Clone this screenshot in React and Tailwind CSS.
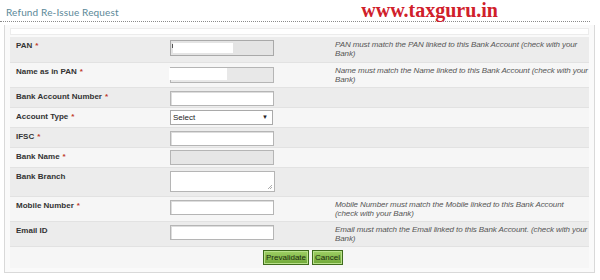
import React from 'react'

const rows=[
{label:'PAN',req:true,kind:'pan',h:'h-[26px]',hint:['PAN must match the PAN linked to this Bank Account (check with your','Bank)']},
{label:'Name as in PAN',req:true,kind:'name',h:'h-[25px]',hint:['Name must match the Name linked to this Bank Account (check with your','Bank)']},
{label:'Bank Account Number',req:true,kind:'text',h:'h-[20px]'},
{label:'Account Type',req:true,kind:'select',h:'h-[20px]'},
{label:'IFSC',req:true,kind:'text',h:'h-[20px]'},
{label:'Bank Name',req:true,kind:'disabled',h:'h-[20px]'},
{label:'Bank Branch',req:false,kind:'area',h:'h-[29px]'},
{label:'Mobile Number',req:true,kind:'text',h:'h-[25px]',hint:['Mobile Number must match the Mobile linked to this Bank Account','(check with your Bank)']},
{label:'Email ID',req:false,kind:'text',h:'h-[25px]',hint:['Email must match the Email linked to this Bank Account. (check with your','Bank)']}
]

function Field({kind}){

if(kind==='pan'){
return(
<div className="relative w-[104px] h-[16px] bg-[#e4e4e4] border border-[#a9a9a9] mt-[3px]">
<div className="absolute left-[2px] top-[2px] w-[60px] h-[10px] bg-white"/>
<div className="absolute left-[1px] top-[3px] w-[1px] h-[4px] bg-[#555]"/>
</div>
)
}

if(kind==='name'){
return(
<div className="relative w-[104px] h-[16px] bg-[#e8e8e8] border border-[#b5b5b5] mt-[4px]">
<div className="absolute left-[-2px] top-[0px] w-[58px] h-[12px] bg-white"/>
</div>
)
}

if(kind==='select'){
return(
<div className="w-[103px] h-[15px] bg-white border border-[#a9a9a9] mt-[2px] flex items-center justify-between px-[2px] text-[8px] text-[#222]">
<span>Select</span>
<span className="text-[6px] pr-[2px]">▼</span>
</div>
)
}

if(kind==='disabled'){
return(
<div className="w-[104px] h-[15px] bg-[#e6e6e6] border border-[#b5b5b5] mt-[2px]"/>
)
}

if(kind==='area'){
return(
<div className="relative w-[105px] h-[21px] bg-white border border-[#b5b5b5] mt-[3px]">
<svg className="absolute right-[1px] bottom-[1px]" width="6" height="6" viewBox="0 0 6 6">
<path d="M5 1 L1 5 M5 3 L3 5" stroke="#999" strokeWidth="0.8"/>
</svg>
</div>
)
}

return(
<div className="w-[104px] h-[15px] bg-white border border-[#b5b5b5] shadow-[inset_1px_1px_0_#ddd] mt-[3px]"/>
)

}

export default function App(){

return(

<div className="w-[600px] h-[280px] bg-white overflow-hidden relative font-['Liberation_Sans',Arial,sans-serif]">

<div className="flex items-end justify-between pl-[6px] pr-[10px] pt-[1px] h-[22px] border-b border-dotted border-[#8a8a8a] w-[590px]">

<span className="font-['Lato',sans-serif] text-[10px] tracking-[0.15px] text-[#5a8898] pb-[1px]">
Refund Re-Issue Request
</span>

<span className="font-['Liberation_Serif',serif] font-bold text-[20px] leading-none text-[#d0202a] mr-[82px] pb-[1px]">
www.taxguru.in
</span>

</div>

<div className="ml-[4px] mt-[3px] w-[591px] border-l border-r border-b border-[#d9d9d9] bg-[#fafafa] px-[5px] pt-[3px] pb-[4px]">

<div className="h-[7px] bg-white border border-[#ececec]"/>

<div className="mt-[2px]">

{rows.map((r,i)=>(

<div
key={r.label}
className={
'grid grid-cols-[160px_165px_1fr] border-b border-[#e2e2e2] '+
r.h+' '+
(i%2===0?'bg-[#ececec]':'bg-[#f6f6f6]')
}
>

<div className="pl-[6px] pt-[4px] text-[8px] font-bold text-[#333] leading-[10px]">
{r.label}
{r.req&&<span className="text-[#c0392b] ml-[3px]">*</span>}
</div>

<div>
<Field kind={r.kind}/>
</div>

<div className="pt-[3px] text-[8px] italic text-[#555] leading-[9px] tracking-[-0.1px] whitespace-nowrap">
{r.hint&&r.hint.map(line=>(
<div key={line}>{line}</div>
))}
</div>

</div>

))}

<div className="h-[21px] bg-[#f6f6f6] flex items-center pl-[253px] gap-[3px]">

<button className="h-[15px] px-[2px] text-[8px] text-[#1d2b10] bg-gradient-to-b from-[#9fd065] to-[#6ea735] border border-[#3f6b1d] shadow-[inset_0_0_0_1px_#b8e08a]">
Prevalidate
</button>

<button className="h-[15px] px-[2px] text-[8px] text-[#1d2b10] bg-gradient-to-b from-[#9fd065] to-[#6ea735] border border-[#3f6b1d] shadow-[inset_0_0_0_1px_#b8e08a]">
Cancel
</button>

</div>

</div>

</div>

</div>

)

}
